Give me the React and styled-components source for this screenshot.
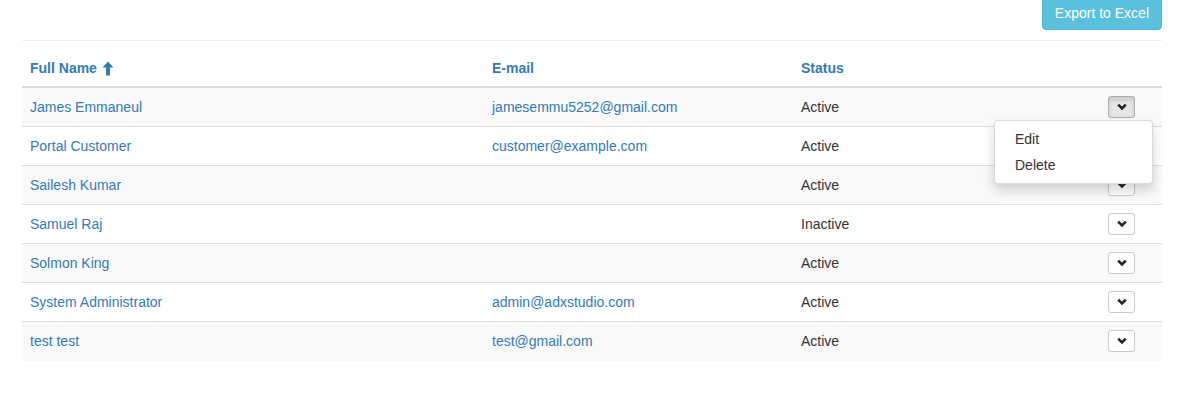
import React from "react";
import styled, { createGlobalStyle } from "styled-components";

const Global = createGlobalStyle`
  html, body { margin: 0; padding: 0; background: #fff; }
  body { font-family: "Liberation Sans", Arial, sans-serif; font-size: 14px; line-height: 1.42857; color: #333; }
  * { box-sizing: border-box; }
`;

const Page = styled.div`
  margin: 0 28px 0 22px;
`;

const Toolbar = styled.div`
  display: flex;
  justify-content: flex-end;
  height: 41px;
  border-bottom: 1px solid #eee;
`;

const ExportButton = styled.button`
  margin-top: -4px;
  height: 34px;
  padding: 6px 12px;
  font-family: inherit;
  font-size: 14px;
  line-height: 20px;
  color: #fff;
  background: #5bc0de;
  border: 1px solid #46b8da;
  border-radius: 4px;
  cursor: pointer;
`;

const Table = styled.table`
  width: 100%;
  border-collapse: collapse;
  border-spacing: 0;
  table-layout: fixed;
`;

const Th = styled.th`
  text-align: left;
  padding: 17px 8px 8px;
  line-height: 20px;
  font-weight: bold;
  border-bottom: 2px solid #ddd;
  width: ${(p) => p.$w}px;
`;

const SortLink = styled.a`
  color: #337ab7;
  text-decoration: none;
  display: inline-flex;
  align-items: center;
  gap: 5px;
`;

const Tr = styled.tr`
  background: ${(p) => (p.$striped ? "#f9f9f9" : "#fff")};
`;

const Td = styled.td`
  height: ${(p) => (p.$first ? 38 : 39)}px;
  padding: 8px;
  line-height: 20px;
  vertical-align: middle;
  border-top: ${(p) => (p.$first ? "0" : "1px solid #ddd")};
`;

const CellLink = styled.a`
  color: #337ab7;
  text-decoration: none;
`;

const BtnGroup = styled.div`
  position: relative;
  display: block;
  width: 27px;
  height: 22px;
`;

const ToggleButton = styled.button`
  display: flex;
  align-items: center;
  justify-content: center;
  width: 27px;
  height: 22px;
  padding: 0;
  background: ${(p) => (p.$open ? "#e6e6e6" : "#fff")};
  border: 1px solid ${(p) => (p.$open ? "#adadad" : "#ccc")};
  border-radius: 3px;
  box-shadow: ${(p) => (p.$open ? "inset 0 3px 5px rgba(0,0,0,.125)" : "none")};
  cursor: pointer;
`;

const Menu = styled.ul`
  position: absolute;
  top: 100%;
  left: -114px;
  margin: 2px 0 0;
  padding: 5px 0;
  width: 159px;
  list-style: none;
  background: #fff;
  border: 1px solid rgba(0, 0, 0, 0.15);
  border-radius: 4px;
  box-shadow: 0 6px 12px rgba(0, 0, 0, 0.175);
  z-index: 10;
`;

const MenuItem = styled.li`
  padding: 3px 20px;
  line-height: 20px;
  color: #333;
  white-space: nowrap;
`;

const Chevron = () => (
  <svg width="10" height="8" viewBox="0 0 10 8">
    <path d="M1.2 1.6 L5 5.4 L8.8 1.6" fill="none" stroke="#222" strokeWidth="2.6" strokeLinecap="butt" />
  </svg>
);

const ArrowUp = () => (
  <svg width="12" height="15" viewBox="0 0 12 15">
    <path d="M6 0.5 L11.5 6.5 L8 6.5 L8 14.5 L4 14.5 L4 6.5 L0.5 6.5 Z" fill="#337ab7" />
  </svg>
);

const rows = [
  { name: "James Emmaneul", email: "jamesemmu5252@gmail.com", status: "Active", open: true },
  { name: "Portal Customer", email: "customer@example.com", status: "Active" },
  { name: "Sailesh Kumar", email: "", status: "Active" },
  { name: "Samuel Raj", email: "", status: "Inactive" },
  { name: "Solmon King", email: "", status: "Active" },
  { name: "System Administrator", email: "admin@adxstudio.com", status: "Active" },
  { name: "test test", email: "test@gmail.com", status: "Active" },
];

export default function App() {
  return (
    <Page>
      <Global />
      <Toolbar>
        <ExportButton>Export to Excel</ExportButton>
      </Toolbar>
      <Table>
        <thead>
          <tr>
            <Th $w={462}>
              <SortLink>
                Full Name <ArrowUp />
              </SortLink>
            </Th>
            <Th $w={309}>
              <SortLink>E-mail</SortLink>
            </Th>
            <Th $w={307}>
              <SortLink>Status</SortLink>
            </Th>
            <Th $w={62}></Th>
          </tr>
        </thead>
        <tbody>
          {rows.map((r, i) => (
            <Tr key={r.name} $striped={i % 2 === 0}>
              <Td $first={i === 0}>
                <CellLink>{r.name}</CellLink>
              </Td>
              <Td $first={i === 0}>
                <CellLink>{r.email}</CellLink>
              </Td>
              <Td $first={i === 0}>{r.status}</Td>
              <Td $first={i === 0}>
                <BtnGroup>
                  <ToggleButton $open={r.open}>
                    <Chevron />
                  </ToggleButton>
                  {r.open && (
                    <Menu>
                      <MenuItem>Edit</MenuItem>
                      <MenuItem>Delete</MenuItem>
                    </Menu>
                  )}
                </BtnGroup>
              </Td>
            </Tr>
          ))}
        </tbody>
      </Table>
    </Page>
  );
}
